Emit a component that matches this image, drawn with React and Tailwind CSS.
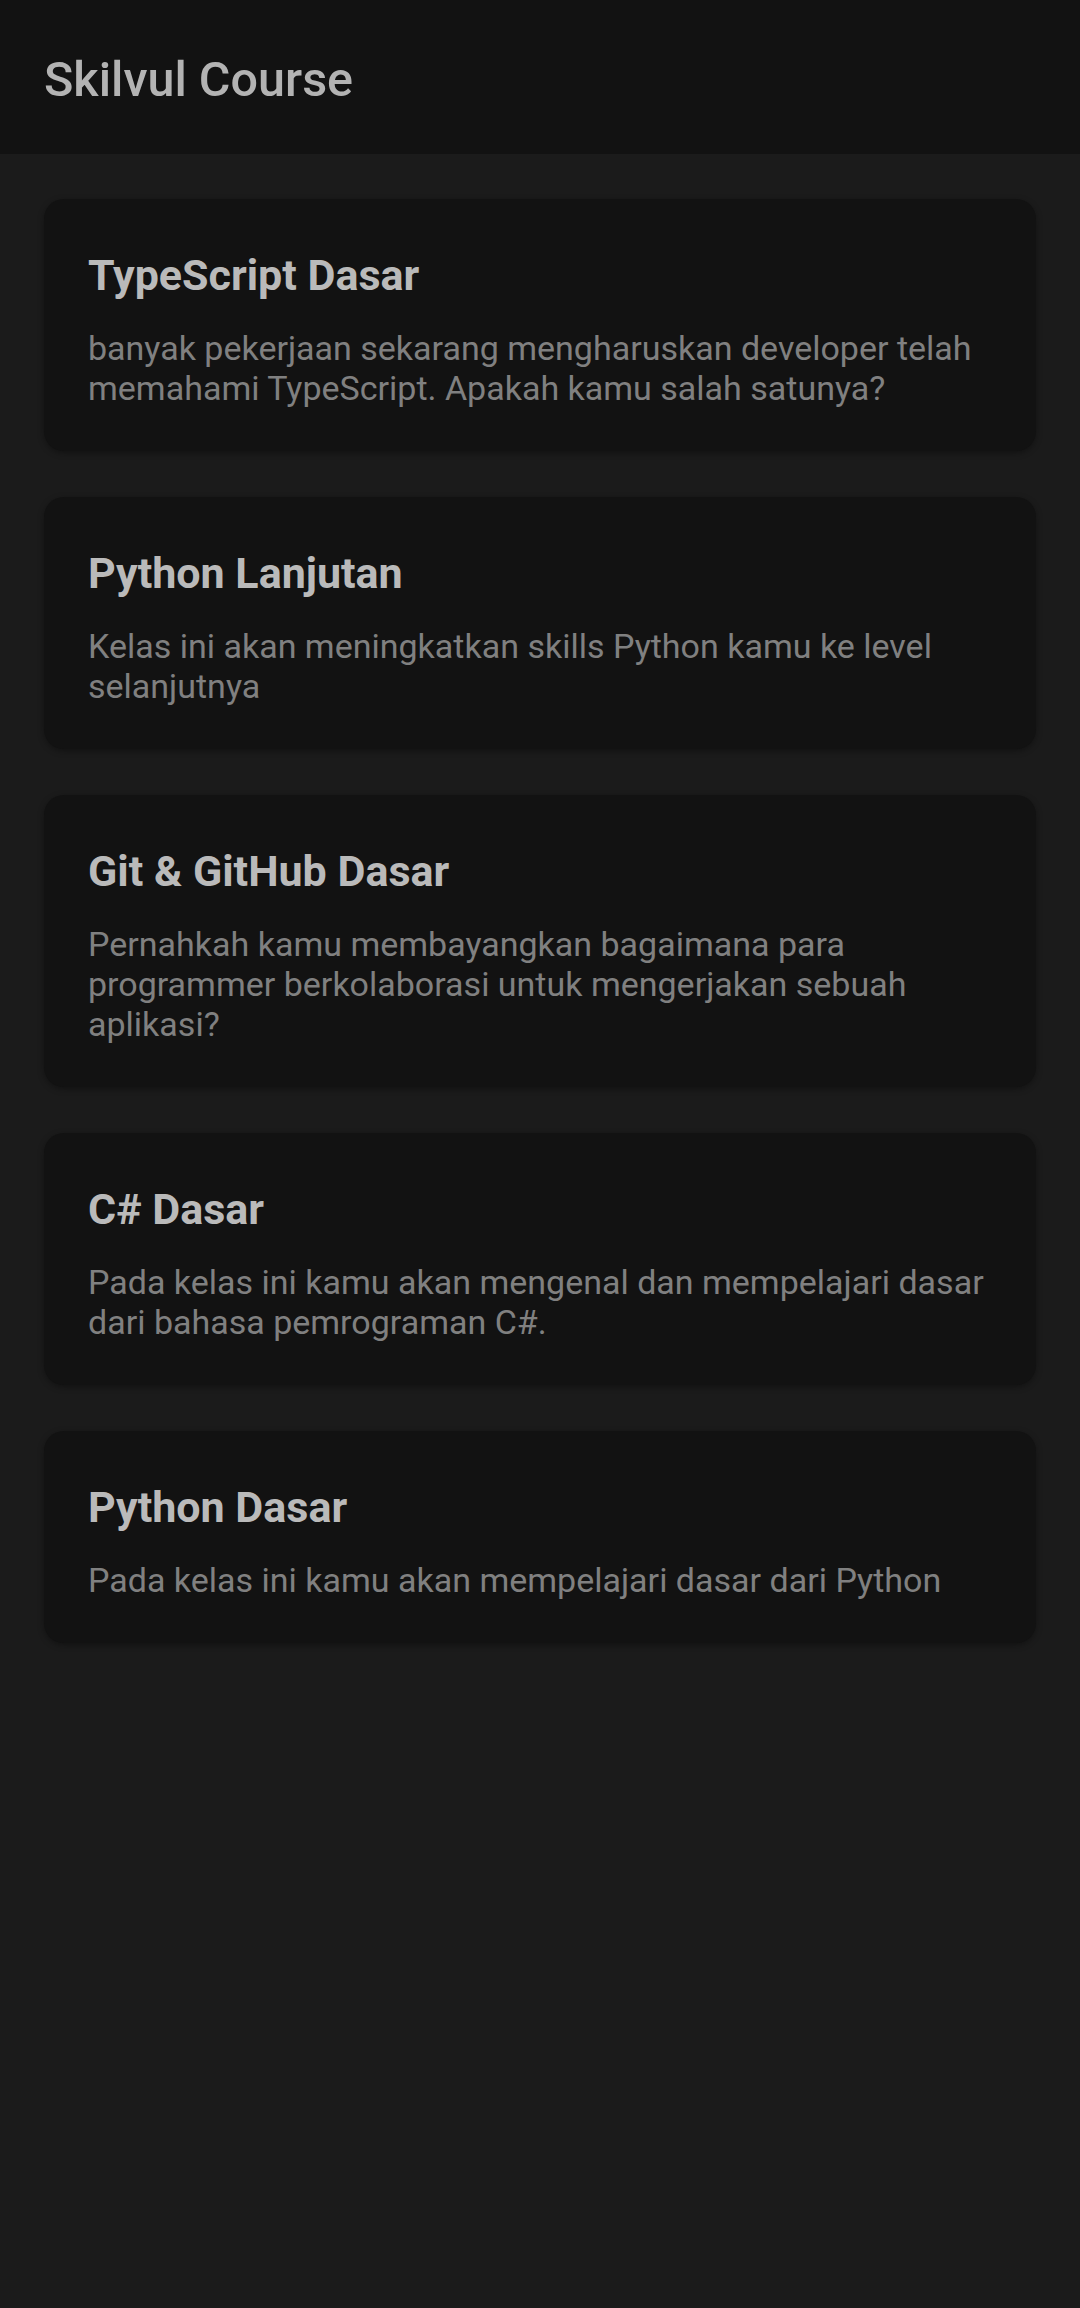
import React from "react";

const courses = [
  {
    title: "TypeScript Dasar",
    desc: "banyak pekerjaan sekarang mengharuskan developer telah memahami TypeScript. Apakah kamu salah satunya?",
  },
  {
    title: "Python Lanjutan",
    desc: "Kelas ini akan meningkatkan skills Python kamu ke level selanjutnya",
  },
  {
    title: "Git & GitHub Dasar",
    desc: "Pernahkah kamu membayangkan bagaimana para programmer berkolaborasi untuk mengerjakan sebuah aplikasi?",
  },
  {
    title: "C# Dasar",
    desc: "Pada kelas ini kamu akan mengenal dan mempelajari dasar dari bahasa pemrograman C#.",
  },
  {
    title: "Python Dasar",
    desc: "Pada kelas ini kamu akan mempelajari dasar dari Python",
  },
];

export default function App() {
  return (
    <div
      className="min-h-[2308px] w-full bg-[#1b1b1b]"
      style={{ fontFamily: "Roboto, 'Noto Sans', sans-serif" }}
    >
      <header className="h-[154px] bg-[#121212] px-[44px] pt-[44px]">
        <h1 className="text-[48.5px] font-medium leading-normal text-[#b3b3b3]">
          Skilvul Course
        </h1>
      </header>
      <main className="flex flex-col gap-[46px] px-[44px] pt-[45px]">
        {courses.map((c) => (
          <div
            key={c.title}
            className="rounded-[20px] bg-[#121212] px-[44px] pt-[51px] pb-[43px] shadow-[0_2px_6px_rgba(0,0,0,0.35)]"
          >
            <h2 className="text-[43px] font-bold leading-[50px] text-[#bababa]">
              {c.title}
            </h2>
            <p className="mt-[28px] text-[34px] leading-[40px] text-[#808080]">
              {c.desc}
            </p>
          </div>
        ))}
      </main>
    </div>
  );
}
